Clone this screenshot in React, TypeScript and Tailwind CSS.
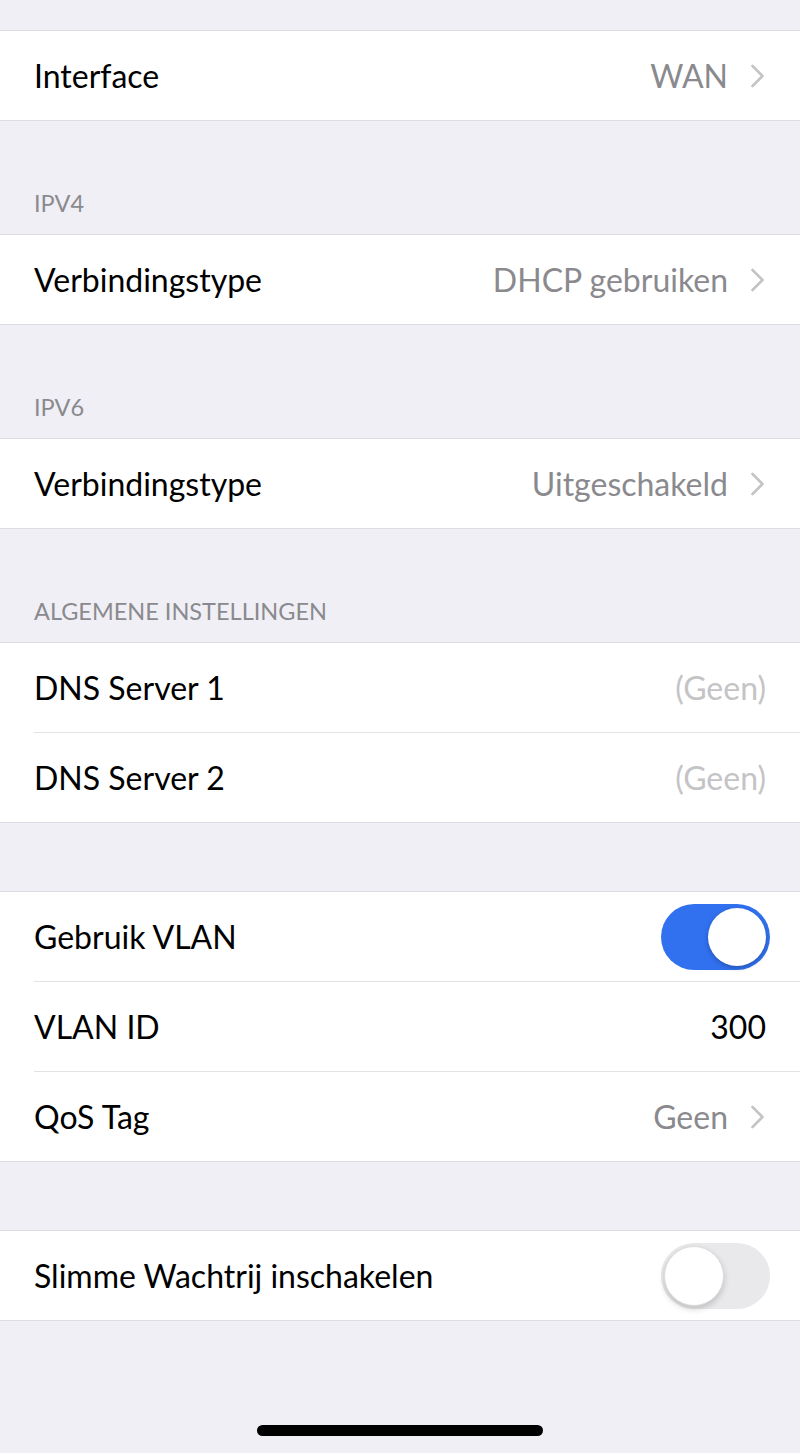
import React from 'react';

const font = { fontFamily: 'Lato, "Noto Sans", sans-serif' };

function Chevron() {
  return (
    <svg width="16" height="24" viewBox="0 0 16 24" className="ml-[22px] shrink-0">
      <path d="M2.5 2l10 10-10 10" fill="none" stroke="#c4c4c7" strokeWidth="2.6" strokeLinecap="round" strokeLinejoin="round" />
    </svg>
  );
}

function Toggle({ on }: { on: boolean }) {
  if (on) {
    return (
      <div className="relative w-[109px] h-[66px] rounded-full bg-[#3171ef] shrink-0 mr-[-4px]">
        <div className="absolute right-[4px] top-[4px] w-[58px] h-[58px] rounded-full bg-white shadow-[0_2px_5px_rgba(0,0,0,0.25)]" />
      </div>
    );
  }
  return (
    <div className="relative w-[109px] h-[66px] rounded-full bg-[#e9e9eb] shrink-0 mr-[-4px]">
      <div className="absolute left-[3px] top-[3px] w-[60px] h-[60px] rounded-full bg-white border border-[#dcdcdc] shadow-[0_3px_6px_rgba(0,0,0,0.18)]" />
    </div>
  );
}

type RowProps = {
  label: string;
  value?: React.ReactNode;
  chevron?: boolean;
  last?: boolean;
};

function Row({ label, value, chevron, last }: RowProps) {
  return (
    <div className={`pl-[34px] bg-white ${last ? 'border-b border-[#dcdce1]' : ''}`}>
      <div className={`flex items-center pr-[34px] ${last ? 'h-[89px]' : 'h-[90px] border-b border-[#e2e2e6]'}`}>
        <span className="text-[32px] text-black flex-1">{label}</span>
        {value}
        {chevron && <Chevron />}
      </div>
    </div>
  );
}

function Group({ children }: { children: React.ReactNode }) {
  return <div className="border-t border-[#dcdce1] bg-white">{children}</div>;
}

function Header({ title }: { title?: string }) {
  if (!title) return <div className="h-[68px]" />;
  return (
    <div className="h-[113px] flex items-end pb-[18px] pl-[34px]">
      <span className="text-[23.5px] leading-[26px] text-[#8a8a8e]">{title}</span>
    </div>
  );
}

export default function App() {
  return (
    <div className="w-[800px] h-[1453px] bg-[#f0eff5] flex flex-col" style={font}>
      <div className="h-[30px]" />
      <Group>
        <Row label="Interface" value={<span className="text-[32px] text-[#8a8a8e]">WAN</span>} chevron last />
      </Group>

      <Header title="IPV4" />
      <Group>
        <Row label="Verbindingstype" value={<span className="text-[32px] text-[#8a8a8e]">DHCP gebruiken</span>} chevron last />
      </Group>

      <Header title="IPV6" />
      <Group>
        <Row label="Verbindingstype" value={<span className="text-[32px] text-[#8a8a8e]">Uitgeschakeld</span>} chevron last />
      </Group>

      <Header title="ALGEMENE INSTELLINGEN" />
      <Group>
        <Row label="DNS Server 1" value={<span className="text-[32px] text-[#c4c4c6]">(Geen)</span>} />
        <Row label="DNS Server 2" value={<span className="text-[32px] text-[#c4c4c6]">(Geen)</span>} last />
      </Group>

      <Header />
      <Group>
        <Row label="Gebruik VLAN" value={<Toggle on />} />
        <Row label="VLAN ID" value={<span className="text-[32px] text-black">300</span>} />
        <Row label="QoS Tag" value={<span className="text-[32px] text-[#8a8a8e]">Geen</span>} chevron last />
      </Group>

      <Header />
      <Group>
        <Row label="Slimme Wachtrij inschakelen" value={<Toggle on={false} />} last />
      </Group>

      <div className="flex-1 flex items-end justify-center pb-[17px]">
        <div className="w-[286px] h-[11px] rounded-full bg-black" />
      </div>
    </div>
  );
}
